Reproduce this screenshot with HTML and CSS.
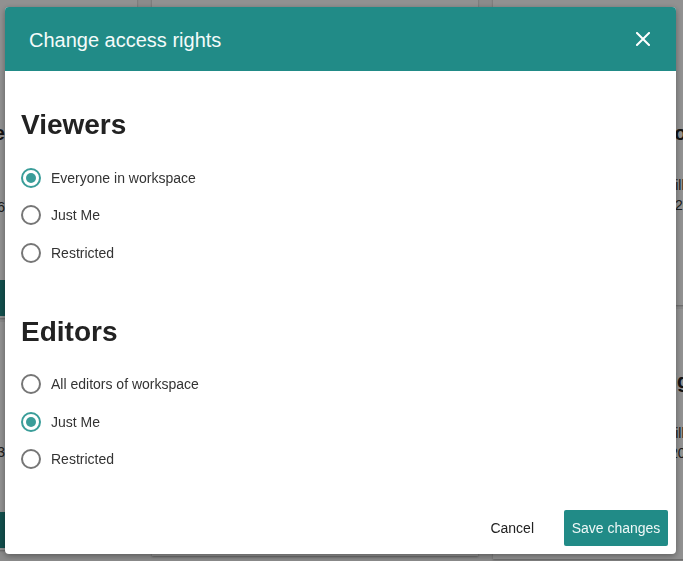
FILE: index.html
```html
<!DOCTYPE html>
<html lang="en">
<head>
<meta charset="utf-8">
<title>Change access rights</title>
<link rel="stylesheet" href="styles.css">
</head>
<body>
<div class="page">
  <div class="columns">
    <div class="column">
      <div class="card card-left card-l1">
        <div class="card-body">
          <div class="card-title">Live</div>
          <div class="card-line">&nbsp;</div>
          <div class="card-line">Updated 16</div>
        </div>
        <div class="card-foot"></div>
      </div>
      <div class="card card-left card-l2">
        <div class="card-body">
          <div class="card-line">2023</div>
        </div>
        <div class="card-foot"></div>
      </div>
    </div>
    <div class="column">
      <div class="card card-mid"></div>
    </div>
    <div class="column">
      <div class="card card-right card-r1">
        <div class="card-body">
          <div class="card-title">Logo</div>
          <div class="card-line">William</div>
          <div class="card-line line-date">2026</div>
        </div>
      </div>
      <div class="card card-right card-r2">
        <div class="card-body">
          <div class="card-title title-shift">Big</div>
          <div class="card-line">William</div>
          <div class="card-line line-date2">2026</div>
        </div>
      </div>
    </div>
  </div>
</div>
<div class="overlay"></div>
<div class="modal">
  <div class="modal-header">
    <span class="modal-title">Change access rights</span>
    <button class="close" aria-label="Close">
      <svg width="14" height="14" viewBox="0 0 14 14"><path d="M1 1L13 13M13 1L1 13" stroke="#fff" stroke-width="2" stroke-linecap="square"/></svg>
    </button>
  </div>
  <div class="modal-body">
    <section class="group">
      <h2 class="group-title">Viewers</h2>
      <label class="option"><span class="radio checked"></span><span class="label">Everyone in workspace</span></label>
      <label class="option"><span class="radio"></span><span class="label">Just Me</span></label>
      <label class="option"><span class="radio"></span><span class="label">Restricted</span></label>
    </section>
    <section class="group group-2">
      <h2 class="group-title">Editors</h2>
      <label class="option"><span class="radio"></span><span class="label">All editors of workspace</span></label>
      <label class="option"><span class="radio checked"></span><span class="label">Just Me</span></label>
      <label class="option"><span class="radio"></span><span class="label">Restricted</span></label>
    </section>
  </div>
  <div class="modal-footer">
    <button class="btn btn-cancel">Cancel</button>
    <button class="btn btn-save">Save changes</button>
  </div>
</div>
</body>
</html>
```
FILE: styles.css
```css
* { box-sizing: border-box; }
html, body {
  margin: 0;
  padding: 0;
  width: 683px;
  height: 561px;
  overflow: hidden;
  font-family: "Liberation Sans", Arial, sans-serif;
  background: #f4f4f4;
}
.page {
  width: 683px;
  height: 561px;
  overflow: hidden;
}
.columns {
  display: flex;
  gap: 15px;
  margin-left: -189px;
  margin-top: -14px;
  align-items: flex-start;
}
.column {
  width: 326px;
  flex: none;
  display: flex;
  flex-direction: column;
  gap: 4px;
}
.card {
  background: #fff;
  box-shadow: 0 1px 2px rgba(0,0,0,0.3);
  display: flex;
  flex-direction: column;
  overflow: hidden;
}
.card-l1 { height: 332px; }
.card-l2 { height: 228px; }
.card-mid { height: 570px; }
.card-r1 { height: 319px; }
.card-r2 { height: 250px; }
.card-body {
  flex: 1;
}
.card-left .card-body {
  text-align: right;
  padding-right: 132px;
}
.card-right .card-body {
  padding-left: 169px;
}
.card-l1 .card-body { padding-top: 135px; }
.card-l2 .card-body { padding-top: 120px; }
.card-r1 .card-body { padding-top: 135px; }
.card-r2 .card-body { padding-top: 60px; }
.card-title {
  font-weight: bold;
  font-size: 20px;
  line-height: 24px;
  color: #222;
  margin-bottom: 30px;
  white-space: nowrap;
}
.card-l1 .card-title { margin-bottom: 32px; }
.title-shift { margin-left: -5px; }
.card-line {
  font-size: 14px;
  color: #333;
  line-height: 20px;
  white-space: nowrap;
}
.line-date { padding-left: 13px; }
.line-date2 { padding-left: 8px; }
.card-foot {
  flex: none;
  height: 36px;
  margin-bottom: 2px;
  background: #218b87;
}
.overlay {
  position: fixed;
  inset: 0;
  background: rgba(0,0,0,0.43);
}
.modal {
  position: fixed;
  left: 5px;
  top: 7px;
  width: 671px;
  height: 547px;
  background: #fff;
  border-radius: 4px;
  box-shadow: 0 2px 6px rgba(0,0,0,0.35);
  display: flex;
  flex-direction: column;
  overflow: hidden;
}
.modal-header {
  height: 64px;
  flex: none;
  background: #218b87;
  display: flex;
  align-items: center;
  justify-content: space-between;
  padding: 0 26px 0 24px;
}
.modal-title {
  color: #f4fbfa;
  font-size: 20px;
  line-height: 24px;
  margin-top: 1px;
}
.close {
  background: none;
  border: 0;
  padding: 0;
  width: 14px;
  height: 14px;
  display: flex;
  cursor: pointer;
}
.modal-body {
  flex: 1;
  padding: 38px 16px 0 16px;
}
.group-title {
  margin: 0 0 18px 0;
  font-size: 28px;
  line-height: 32px;
  font-weight: bold;
  color: #222;
}
.group-2 { margin-top: 44px; }
.option {
  display: flex;
  align-items: center;
  height: 37.5px;
  gap: 10px;
  cursor: pointer;
}
.radio {
  width: 20px;
  height: 20px;
  border-radius: 50%;
  border: 2px solid #767676;
  display: flex;
  align-items: center;
  justify-content: center;
  flex: none;
}
.radio.checked {
  border-color: #3a9d99;
}
.radio.checked::after {
  content: "";
  width: 10px;
  height: 10px;
  border-radius: 50%;
  background: #3a9d99;
}
.label {
  font-size: 14px;
  color: #333;
}
.modal-footer {
  flex: none;
  display: flex;
  justify-content: flex-end;
  align-items: center;
  gap: 15px;
  padding: 0 8px 8px 0;
}
.btn {
  font-family: "Liberation Sans", Arial, sans-serif;
  font-size: 14px;
  height: 36px;
  border: 0;
  border-radius: 2px;
  cursor: pointer;
}
.btn-cancel {
  background: none;
  color: #222;
  padding: 0 15px;
}
.btn-save {
  background: #218b87;
  color: #eef8f7;
  padding: 0 7px;
  width: 104px;
}
```
